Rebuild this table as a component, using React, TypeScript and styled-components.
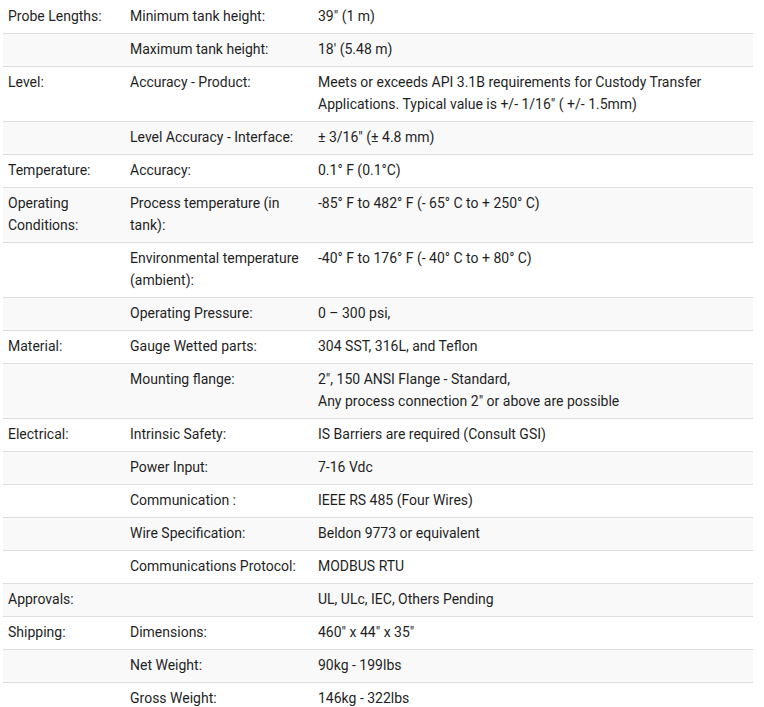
import React from "react";
import styled, { createGlobalStyle } from "styled-components";

const Global = createGlobalStyle`
  html, body { margin: 0; padding: 0; background: #fff; }
  body { font-family: Roboto, "Liberation Sans", sans-serif; }
`;

const Wrap = styled.div`
  padding: 1px 11px 0 3px;
`;

const Table = styled.table`
  width: 750px;
  border-collapse: collapse;
  table-layout: fixed;
  font-family: Roboto, "Liberation Sans", sans-serif;
  font-size: 14px;
  line-height: 22px;
  color: #1f1f1f;
`;

const Row = styled.tr<{ $shade: boolean }>`
  background: ${(p) => (p.$shade ? "#f9f9f9" : "#ffffff")};
  border-bottom: 1px solid #dddddd;
`;

const Cell = styled.td`
  padding: 4px 5px 6px 5px;
  vertical-align: top;
  text-align: left;
`;

type Spec = [string, string, React.ReactNode];

const specs: Spec[] = [
  ["Probe Lengths:", "Minimum tank height:", "39\u2033 (1 m)"],
  ["", "Maximum tank height:", "18\u2032 (5.48 m)"],
  [
    "Level:",
    "Accuracy - Product:",
    "Meets or exceeds API 3.1B requirements for Custody Transfer Applications. Typical value is +/- 1/16\u2033 ( +/- 1.5mm)",
  ],
  ["", "Level Accuracy - Interface:", "\u00b1 3/16\u2033 (\u00b1 4.8 mm)"],
  ["Temperature:", "Accuracy:", "0.1\u00b0 F (0.1\u00b0C)"],
  [
    "Operating Conditions:",
    "Process temperature (in tank):",
    "-85\u00b0 F to 482\u00b0 F (- 65\u00b0 C to + 250\u00b0 C)",
  ],
  [
    "",
    "Environmental temperature (ambient):",
    "-40\u00b0 F to 176\u00b0 F (- 40\u00b0 C to + 80\u00b0 C)",
  ],
  ["", "Operating Pressure:", "0 \u2013 300 psi,"],
  ["Material:", "Gauge Wetted parts:", "304 SST, 316L, and Teflon"],
  [
    "",
    "Mounting flange:",
    <>
      {"2\u2033, 150 ANSI Flange - Standard,"}
      <br />
      {"Any process connection 2\u2033 or above are possible"}
    </>,
  ],
  ["Electrical:", "Intrinsic Safety:", "IS Barriers are required (Consult GSI)"],
  ["", "Power Input:", "7-16 Vdc"],
  ["", "Communication :", "IEEE RS 485 (Four Wires)"],
  ["", "Wire Specification:", "Beldon 9773 or equivalent"],
  ["", "Communications Protocol:", "MODBUS RTU"],
  ["Approvals:", "", "UL, ULc, IEC, Others Pending"],
  ["Shipping:", "Dimensions:", "460\u2033 x 44\u2033 x 35\u2033"],
  ["", "Net Weight:", "90kg - 199lbs"],
  ["", "Gross Weight:", "146kg - 322lbs"],
];

export default function App() {
  return (
    <Wrap>
      <Global />
      <Table>
        <colgroup>
          <col style={{ width: 122 }} />
          <col style={{ width: 188 }} />
          <col style={{ width: 440 }} />
        </colgroup>
        <tbody>
          {specs.map((s, i) => (
            <Row key={i} $shade={i % 2 === 1}>
              <Cell>{s[0]}</Cell>
              <Cell>{s[1]}</Cell>
              <Cell>{s[2]}</Cell>
            </Row>
          ))}
        </tbody>
      </Table>
    </Wrap>
  );
}
